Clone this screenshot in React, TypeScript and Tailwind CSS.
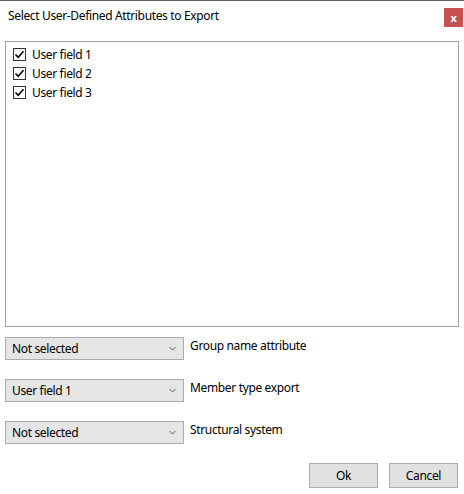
import React, { useState } from 'react';

const options = ['Not selected', 'User field 1', 'User field 2', 'User field 3'];

function Check({ checked, onClick }: { checked: boolean; onClick: () => void }) {
  return (
    <span
      onClick={onClick}
      className="w-[13px] h-[13px] border border-[#333333] bg-white flex items-center justify-center shrink-0 cursor-default"
    >
      {checked && (
        <svg width="11" height="11" viewBox="0 0 11 11">
          <path d="M1.5 5.5 L4.2 8.3 L9.5 2.2" fill="none" stroke="#000" strokeWidth="1.6" />
        </svg>
      )}
    </span>
  );
}

function Combo({ value, label }: { value: string; label: string }) {
  return (
    <div className="flex items-start h-[23px]">
      <div className="w-[179px] h-[23px] bg-[#e5e5e5] border border-[#acacac] flex items-center justify-between pl-[6px] pr-[7px]">
        <span className="text-[12px] text-black leading-none">{value}</span>
        <svg width="7" height="5" viewBox="0 0 7 5">
          <path d="M0.5 1 L3.5 4 L6.5 1" fill="none" stroke="#606060" strokeWidth="1" />
        </svg>
      </div>
      <span className="ml-[6px] text-[12px] text-black leading-[18px]">{label}</span>
    </div>
  );
}

export default function App() {
  const [fields, setFields] = useState([
    { name: 'User field 1', checked: true },
    { name: 'User field 2', checked: true },
    { name: 'User field 3', checked: true },
  ]);

  const toggle = (i: number) =>
    setFields(fields.map((f, j) => (j === i ? { ...f, checked: !f.checked } : f)));

  return (
    <div
      className="w-[464px] h-[494px] bg-white border-t border-[#646464] flex flex-col tracking-[-0.35px]"
      style={{ fontFamily: '"Noto Sans", "Open Sans", sans-serif' }}
    >
      {/* Title bar */}
      <div className="h-[40px] flex items-start justify-between">
        <span className="mt-[6px] ml-[8px] text-[12px] text-black">Select User-Defined Attributes to Export</span>
        <button className="mt-[7px] mr-[1px] w-[19px] h-[19px] bg-[#c75050] text-white text-[11px] font-bold leading-none flex items-center justify-center">
          x
        </button>
      </div>

      {/* Attribute list */}
      <div className="ml-[5px] w-[454px] h-[286px] border border-[#a0a0a0] pt-[3px] pl-[7px] flex flex-col">
        {fields.map((f, i) => (
          <div key={f.name} className="h-[19px] flex items-center gap-[6px]">
            <Check checked={f.checked} onClick={() => toggle(i)} />
            <span className="text-[12px] text-black">{f.name}</span>
          </div>
        ))}
      </div>

      {/* Combos */}
      <div className="ml-[5px] mt-[10px] flex flex-col gap-[19px]">
        <Combo value={options[0]} label="Group name attribute" />
        <Combo value={options[1]} label="Member type export" />
        <Combo value={options[0]} label="Structural system" />
      </div>

      {/* Buttons */}
      <div className="mt-[19px] flex justify-end gap-[11px] pr-[6px]">
        <button className="w-[69px] h-[25px] bg-[#e1e1e1] border border-[#adadad] text-[12px] text-black">Ok</button>
        <button className="w-[69px] h-[25px] bg-[#e1e1e1] border border-[#adadad] text-[12px] text-black">Cancel</button>
      </div>
    </div>
  );
}
